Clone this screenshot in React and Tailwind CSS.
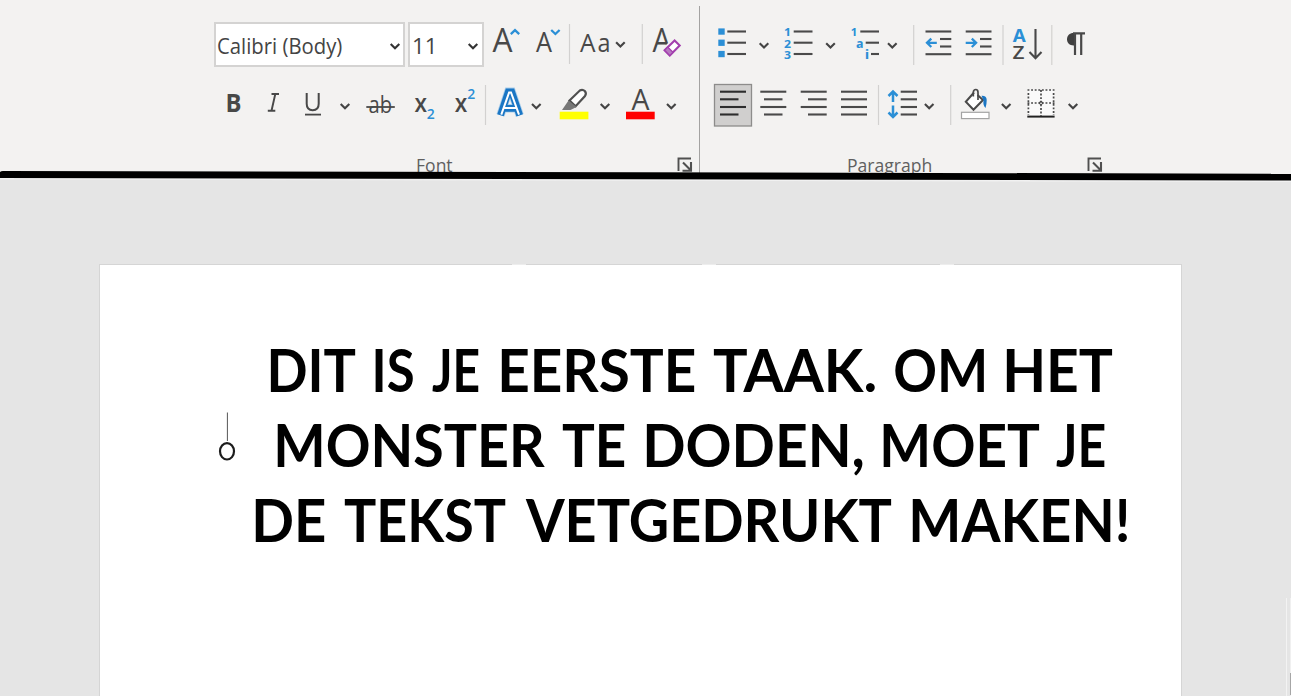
import { useLayoutEffect, useRef, useState } from "react";

const SANS = "'Open Sans', 'Noto Sans', sans-serif";

/* Text whose inked part fills exactly `width` pixels. */
function FitText({ text, width, className }) {
  const ref = useRef(null);
  const [fit, setFit] = useState({ scale: 1, left: 0 });
  useLayoutEffect(() => {
    const cs = getComputedStyle(ref.current);
    const ctx = document.createElement("canvas").getContext("2d");
    ctx.font = `${cs.fontWeight} ${cs.fontSize} ${cs.fontFamily}`;
    const m = ctx.measureText(text);
    const scale = width / (m.actualBoundingBoxRight + m.actualBoundingBoxLeft);
    setFit({ scale, left: m.actualBoundingBoxLeft * scale });
  }, [text, width]);
  return (
    <span className="block shrink-0" style={{ width }}>
      <span
        ref={ref}
        className={"inline-block origin-left whitespace-nowrap " + className}
        style={{ transform: `translateX(${fit.left}px) scaleX(${fit.scale})` }}
      >
        {text}
      </span>
    </span>
  );
}

/* A slice of a ribbon row; drawings use ribbon coordinates. */
function Slot({ x, w, y, h = 48, children }) {
  return (
    <svg width={w} height={h} viewBox={`${x} ${y} ${w} ${h}`} className="block shrink-0 overflow-visible" fill="none">
      {children}
    </svg>
  );
}

const Chevron = ({ x, y, c = "#444444" }) => (
  <path d={`M${x - 4.3} ${y - 2.1}L${x} ${y + 2.2}L${x + 4.3} ${y - 2.1}`} stroke={c} strokeWidth="2.1" />
);
const Sep = ({ x, y }) => <path d={`M${x} ${y}v40`} stroke="#d2d1d0" strokeWidth="1.2" />;
const Lines = ({ rows, c = "#4a4a4a" }) =>
  rows.map(([a, b, y]) => <path key={y} d={`M${a} ${y}H${b}`} stroke={c} strokeWidth="2.1" />);
const T = ({ x, y, s, w, c = "#484848", b = 400, font = SANS, children, ...rest }) => (
  <text
    x={x}
    y={y}
    fontSize={s}
    fill={c}
    fontWeight={b}
    fontFamily={font}
    textLength={w}
    lengthAdjust="spacingAndGlyphs"
    {...rest}
  >
    {children}
  </text>
);
const BLUE = "#2b8fd6";

function FontRowOne() {
  return (
    <div className="flex h-12 items-start pl-[214px]">
      <div className="mt-[2px] mr-[3px] flex h-[45px] w-[191px] items-center border-2 border-[#d4d3d2] bg-white pl-[2px]">
        <FitText text="Calibri (Body)" width={124} className="pt-[2px] text-[21.5px] leading-[40px] text-[#444]" />
        <div className="ml-[47px] pt-[2px]">
          <Slot x={389} w={12} y={40} h={12}>
            <Chevron x={395} y={46} c="#333" />
          </Slot>
        </div>
      </div>
      <div className="mt-[2px] flex h-[45px] w-[76px] items-center border-2 border-[#d4d3d2] bg-white pl-[3px]">
        <FitText text="11" width={20} className="pt-[2px] text-[21.5px] leading-[40px] text-[#444]" />
        <div className="ml-[34px] pt-[2px]">
          <Slot x={467} w={12} y={40} h={12}>
            <Chevron x={473} y={46} c="#333" />
          </Slot>
        </div>
      </div>
      <Slot x={484} w={43} y={20}>
        <T x={492.5} y={52} s={33} w={20}>A</T>
        <path d="M510.8 34.2l4.2-4 4.2 4" stroke={BLUE} strokeWidth="2.3" />
      </Slot>
      <Slot x={527} w={46} y={20}>
        <T x={536} y={52} s={26.5} w={16}>A</T>
        <path d="M551.2 30l4.2 4 4.2-4" stroke={BLUE} strokeWidth="2.3" />
        <Sep x={569.5} y={24} />
      </Slot>
      <Slot x={573} w={72} y={20}>
        <T x={580} y={52} s={25.5} w={15.5}>A</T>
        <T x={597.5} y={52} s={25} w={13}>a</T>
        <Chevron x={620.4} y={44.3} />
        <Sep x={642.3} y={24} />
      </Slot>
      <Slot x={645} w={50} y={20}>
        <T x={652.5} y={52} s={33} w={18.5}>A</T>
        <path
          d="M664.6 49.3L674.4 40.3L679.8 46.3L669.8 55.6Z"
          fill="#f3f2f1"
          stroke="#f3f2f1"
          strokeWidth="4.5"
        />
        <path d="M664.6 50.3L674.6 40.5L679.7 45.6L669.8 55.6Z" fill="#fff" stroke="#a33fae" strokeWidth="2.1" />
        <path d="M664.6 50.3L667.8 47.1L673 52.3L669.8 55.6Z" fill="#b779c0" stroke="#a33fae" strokeWidth="1.3" />
      </Slot>
    </div>
  );
}

function FontRowTwo() {
  return (
    <div className="mt-3 flex h-12 pl-[214px]">
      <Slot x={214} w={40} y={80}>
        <T x={225.5} y={111.6} s={25} w={16} b={700}>B</T>
      </Slot>
      <Slot x={254} w={40} y={80}>
        <path d="M271.5 94h7.5M267.8 110.7h7.5M275.3 94l-3.8 16.7" stroke="#484848" strokeWidth="1.9" />
      </Slot>
      <Slot x={294} w={62} y={80}>
        <path d="M306.7 93v10.8c0 4.2 2.1 6.4 6 6.4s6-2.2 6-6.4V93" stroke="#484848" strokeWidth="2" />
        <path d="M305 114.6h16" stroke="#484848" strokeWidth="1.8" />
        <Chevron x={345} y={106} />
      </Slot>
      <Slot x={356} w={48} y={80}>
        <T x={368.5} y={112.7} s={23.5} w={23.5}>ab</T>
        <path d="M366.3 107h28.5" stroke="#484848" strokeWidth="1.8" />
      </Slot>
      <Slot x={404} w={40} y={80}>
        <T x={414.5} y={111.7} s={24.5} w={12.5} b={600}>x</T>
        <T x={426.8} y={119} s={14} w={8} b={600} c={BLUE}>2</T>
      </Slot>
      <Slot x={444} w={44} y={80}>
        <T x={454.7} y={111.7} s={24.5} w={12.5} b={600}>x</T>
        <T x={467.3} y={98.7} s={14} w={8} b={600} c={BLUE}>2</T>
        <Sep x={485.5} y={85} />
      </Slot>
      <Slot x={488} w={62} y={80}>
        <path d="M500.5 115.3L508.3 91.8H511.7L519.7 115.3M503.8 108.3H516.500" stroke="#a9cdea" strokeWidth="8.4" />
        <path d="M500.5 115.3L508.3 91.8H511.7L519.700 115.300M503.800 108.300H516.500" stroke="#1a76c4" strokeWidth="6.800" />
        <path d="M501.300 114.700L509.100 92.500H511L519 114.700M504.500 108H516" stroke="#fff" strokeWidth="2" />
        <Chevron x={536.300} y={106} />
      </Slot>
      <Slot x={550} w={66} y={80}>
        <path d="M569.500 100.500L579.800 90.500Q582.500 88.800 584.800 91Q586.800 93.300 585 96L575.600 106.200Z" fill="#fff" stroke="#505050" strokeWidth="2.200" />
        <path d="M568.500 100.500L576.500 107L570.500 110H562Z" fill="#777" />
        <path d="M559.700 111.700h28.700v7.600h-28.700z" fill="#ffff00" />
        <Chevron x={605} y={106} />
      </Slot>
      <Slot x={616} w={66} y={80}>
        <T x={631.500} y={110} s={28.500} w={18}>A</T>
        <path d="M626 111.700h28.700v7.600H626z" fill="#ff0000" />
        <Chevron x={671.300} y={106} />
      </Slot>
    </div>
  );
}

function ParagraphRowOne() {
  return (
    <div className="flex h-12 pl-[12px]">
      <Slot x={712} w={62} y={20}>
        {[31.500, 42.700, 54].map((y) => (
          <rect key={y} x="718.300" y={y - 3.100} width="6.400" height="6.300" fill={BLUE} />
        ))}
        <Lines rows={[[727.300, 746, 31.500], [727.300, 746, 42.700], [727.300, 746, 54]]} />
        <Chevron x={764} y={45.300} />
      </Slot>
      <Slot x={774} w={68} y={20}>
        <T x={784} y={36} s={10.500} w={7} b={700} c={BLUE}>1</T>
        <T x={784} y={47.700} s={10.500} w={7} b={700} c={BLUE}>2</T>
        <T x={784} y={59} s={10.500} w={7} b={700} c={BLUE}>3</T>
        <Lines rows={[[793.700, 812.500, 31.500], [793.700, 812.500, 42.700], [793.700, 812.500, 54]]} />
        <Chevron x={830.500} y={45.300} />
      </Slot>
      <Slot x={842} w={74} y={20}>
        <T x={850.800} y={36} s={10.500} w={6.500} b={700} c={BLUE}>1</T>
        <T x={856} y={47.500} s={13} w={7.500} b={700} c={BLUE}>a</T>
        <T x={864.800} y={59} s={13} w={4.500} b={700} c={BLUE}>i</T>
        <Lines rows={[[860.300, 879, 31.500], [865.700, 879, 42.700], [871, 879, 54]]} />
        <Chevron x={892.300} y={45.300} />
        <Sep x={913.700} y={25} />
      </Slot>
      <Slot x={916} w={42} y={20}>
        <Lines rows={[[925.500, 951.300, 31.500], [940, 951.300, 39], [940, 951.300, 46.500], [925.500, 951.300, 54.200]]} />
        <path d="M936.800 42.800h-9.500M931.300 38.600l-4.300 4.200 4.300 4.200" stroke={BLUE} strokeWidth="2.300" />
      </Slot>
      <Slot x={958} w={47} y={20}>
        <Lines rows={[[965.700, 991.500, 31.500], [980, 991.500, 39], [980, 991.500, 46.500], [965.700, 991.500, 54.200]]} />
        <path d="M965.700 42.800h9.800M971.800 38.600l4.300 4.200-4.300 4.200" stroke={BLUE} strokeWidth="2.300" />
        <Sep x={1003} y={25} />
      </Slot>
      <Slot x={1005} w={49} y={20}>
        <T x={1012.800} y={42} s={18} w={13} b={700} c={BLUE}>A</T>
        <T x={1012.600} y={59} s={18.500} w={12} b={600}>Z</T>
        <path d="M1035.500 29v29M1029.500 52l6 6.200 6-6.200" stroke="#484848" strokeWidth="2.100" />
        <Sep x={1051.800} y={25} />
      </Slot>
      <Slot x={1054} w={44} y={20}>
        <path d="M1075 33H1073.500C1069.500 33 1067 35.600 1067 39.300S1069.500 45.500 1073.500 45.500H1075Z" fill="#404040" />
        <path d="M1073 33.300h12M1075 33v22M1081.200 33v22" stroke="#484848" strokeWidth="2.200" />
      </Slot>
    </div>
  );
}

const ROWS = [91.700, 99.300, 107, 114.500];
const spans = (long, short) => ROWS.map((y, i) => [...(i % 2 ? short : long), y]);

function ParagraphRowTwo() {
  return (
    <div className="mt-3 flex h-12 pl-[12px]">
      <Slot x={712} w={42} y={80}>
        <rect x="714.500" y="84.500" width="37" height="41.500" fill="#d0cfce" stroke="#8d8c8b" strokeWidth="1.300" />
        <Lines c="#2d2d2d" rows={spans([720, 746], [720, 738.500])} />
      </Slot>
      <Slot x={754} w={40} y={80}>
        <Lines rows={spans([760.300, 786.300], [764, 782.500])} />
      </Slot>
      <Slot x={794} w={40} y={80}>
        <Lines rows={spans([800.700, 826.700], [808, 826.700])} />
      </Slot>
      <Slot x={834} w={47} y={80}>
        <Lines rows={spans([841, 867], [841, 867])} />
        <Sep x={878.500} y={85} />
      </Slot>
      <Slot x={881} w={72} y={80}>
        <path d="M893 91.500V102M888.500 96l4.500-4.500 4.500 4.500M893 105.500V116.500M888.500 112.500l4.500 4.500 4.500-4.500" stroke={BLUE} strokeWidth="2.500" />
        <Lines rows={spans([900.700, 917], [900.700, 917])} />
        <Chevron x={929.200} y={106} />
        <Sep x={950.700} y={85} />
      </Slot>
      <Slot x={953} w={67} y={80}>
        <path d="M974 92.500L965.800 101.800L973.500 109.800L983 100L977.500 95" fill="#fff" stroke="#4a4a4a" strokeWidth="2" />
        <path d="M973.300 96.500V92.300Q973.500 89.500 975.800 89.500Q978 89.500 978 92.300V100" stroke="#4a4a4a" strokeWidth="1.700" />
        <path d="M981.500 95.800Q986.500 95.500 986.700 100Q986.800 104 985.500 108Q982.800 105 983.500 100.500Z" fill="#1a76c4" />
        <rect x="961.500" y="112.300" width="27.500" height="6.300" fill="#fff" stroke="#a3a3a3" strokeWidth="1.200" />
        <Chevron x={1006.200} y={106} />
      </Slot>
      <Slot x={1020} w={66} y={80}>
        <path d="M1028 89.500h26v27h-26z" fill="#fafafa" />
        <path
          d="M1027.500 90h27M1028.400 93v22M1053.600 93v22M1027.500 103h27M1041 90v26"
          stroke="#4a4a4a"
          strokeWidth="1.700"
          strokeDasharray="1.900 1.700"
        />
        <path d="M1027.300 116.600h27.300" stroke="#222" strokeWidth="2" />
        <circle cx="1041" cy="103" r="1.600" stroke="#4a4a4a" />
        <Chevron x={1073} y={106} />
      </Slot>
    </div>
  );
}

const Launcher = () => (
  <svg width="16" height="16" viewBox="0 0 16 16" fill="none" className="block shrink-0">
    <path d="M1.500 14V1.500H14" stroke="#505050" strokeWidth="1.900" />
    <path d="M6 5.500L13 12.500M14 5V13.700H5.500" stroke="#505050" strokeWidth="2.100" />
  </svg>
);

const LINES = [
  [["DIT", 270, 86], ["IS", 375, 38], ["JE", 432, 47], ["EERSTE", 501, 194], ["TAAK.", 713, 162], ["OM", 895, 89], ["HET", 1006, 107]],
  [["MONSTER", 277, 268], ["TE", 562, 63], ["DODEN,", 646, 217], ["MOET", 883, 157], ["JE", 1056, 49]],
  [["DE", 255, 70], ["TEKST", 344, 162], ["VETGEDRUKT", 525, 367], ["MAKEN!", 912, 215]],
];

export default function App() {
  return (
    <div className="flex h-[696px] w-[1291px] flex-col overflow-hidden bg-[#e5e5e5] font-['Open_Sans','Noto_Sans',sans-serif]">
      <header className="flex h-[176px] shrink-0 overflow-hidden bg-[#f3f2f1]">
        <section className="w-[699px] pt-5">
          <FontRowOne />
          <FontRowTwo />
          <div className="flex pt-[25px] pl-[417px]">
            <FitText text="Font" width={36} className="text-[18.5px] leading-6 text-[#606060]" />
            <div className="ml-[224px] pt-[4px]">
              <Launcher />
            </div>
          </div>
        </section>
        <div className="mt-[6px] w-px bg-[#a3a2a1]" />
        <section className="flex-1 pt-5">
          <ParagraphRowOne />
          <ParagraphRowTwo />
          <div className="flex pt-[25px] pl-[148px]">
            <FitText text="Paragraph" width={83} className="text-[18.5px] leading-6 text-[#606060]" />
            <div className="ml-[156px] pt-[4px]">
              <Launcher />
            </div>
          </div>
        </section>
      </header>
      <svg width="1291" height="13" viewBox="0 170 1291 13" className="relative -mt-[6px] block shrink-0">
        <path d="M0 176L1291 177V182L0 179.500Z" fill="#f1f1f1" />
        <path d="M0 172Q1 171 3 171L1291 173.700V180.500L0 178Z" fill="#000" />
      </svg>
      <main className="flex flex-1 pt-[81px] pl-[99px]">
        <article className="relative w-[1083px] shrink-0 border border-b-0 border-[#d5d5d5] bg-white pt-[67px]">
          <h1 className="text-[60px] leading-[75px] font-bold text-black">
            {LINES.map((words, i) => (
              <div key={i} className="flex h-[75px]">
                {words.map(([text, x, w], j) => (
                  <div key={x} style={{ marginLeft: x - (j ? words[j - 1][1] + words[j - 1][2] : 100) }}>
                    <FitText text={text} width={w} className="font-['Lato',sans-serif] font-bold" />
                  </div>
                ))}
              </div>
            ))}
          </h1>
          <svg width="18" height="50" viewBox="218 412 18 50" fill="none" className="absolute top-[147px] left-[118px]">
            <path d="M227.400 412.500V441" stroke="#555" strokeWidth="1" />
            <ellipse cx="227" cy="451.300" rx="7" ry="8.200" stroke="#1c1c1c" strokeWidth="2.200" />
          </svg>
          <i className="absolute -top-px left-[412px] h-px w-[14px] bg-[#ededed]" />
          <i className="absolute -top-px left-[602px] h-px w-[14px] bg-[#ededed]" />
          <i className="absolute -top-px left-[840px] h-px w-[14px] bg-[#ededed]" />
        </article>
        <div className="mt-[334px] ml-[104px] flex flex-1">
          <div className="mr-[3px] w-px bg-[#f3f3f3]" />
          <div className="w-px bg-[#f0f0f0] pt-[75px]">
            <div className="h-[22px] bg-[#a6a6a6]" />
          </div>
        </div>
      </main>
    </div>
  );
}
